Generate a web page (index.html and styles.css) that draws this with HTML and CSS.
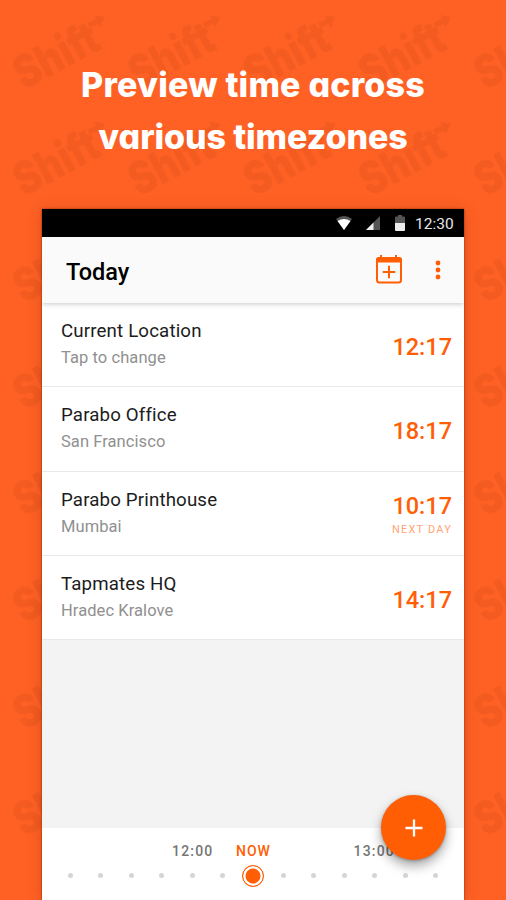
FILE: index.html
```html
<!DOCTYPE html>
<html lang="en">
<head>
<meta charset="utf-8">
<title>Shift</title>
<link rel="stylesheet" href="styles.css">
</head>
<body>
<svg class="backdrop" width="506" height="900" aria-hidden="true">
  <defs>
    <pattern id="shift" x="0" y="0" width="115.3" height="106.7" patternUnits="userSpaceOnUse">
      <g transform="translate(25.500 89.500) rotate(-28)">
        <text class="mark" x="-2" y="0" textLength="90" lengthAdjust="spacingAndGlyphs">Shift</text>
      </g>
      <path d="M94 15l11 2-5 11-2-4-8 4-3-5 9-4z"/>
    </pattern>
  </defs>
  <rect width="506" height="900" fill="url(#shift)"/>
</svg>
<main class="page">
  <h1 class="headline"><span class="line-one">Preview time across</span><span class="line-two">various timezones</span></h1>
  <section class="phone">
    <div class="status">
      <svg class="wifi" width="16" height="14" viewBox="0 0 16 14"><path fill="#555" d="M0 3Q8-3 16 3L8 14z"/><path fill="#fff" d="M1.500 5Q8 1 14.500 5L8 14z"/></svg>
      <svg class="signal" width="14" height="14" viewBox="0 0 14 14"><path fill="#555" d="M14 0v14H0z"/><path fill="#eee" d="M7.500 6.500V14H0z"/></svg>
      <svg class="battery" width="10" height="16" viewBox="0 0 10 16"><path fill="#555" d="M3 0h4v1.500h2q1 0 1 1V8H0V2.500q0-1 1-1h2z"/><path fill="#eee" d="M0 8h10v7q0 1-1 1H1q-1 0-1-1z"/></svg>
      <span>12:30</span>
    </div>
    <header class="appbar">
      <h2>Today</h2>
      <svg class="calendar" width="26" height="29" viewBox="0 0 26 29"><rect x="1" y="3" width="24" height="24.500" rx="2.500" fill="none" stroke="#ff5e05" stroke-width="2"/><path fill="#ff5e05" d="M0 7.500V5q0-3 3-3h1V0h2v2h13V0h2v2h2q3 0 3 3v2.500z"/><path d="M6.700 17h12.600M13 10.700v12.600" stroke="#ff5e05" stroke-width="2"/></svg>
      <svg class="more" width="6" height="20" viewBox="0 0 6 20" fill="#ff5e05"><circle cx="3" cy="3" r="2.400"/><circle cx="3" cy="10" r="2.400"/><circle cx="3" cy="17" r="2.400"/></svg>
    </header>
    <div class="list">
      <article class="row"><div><h3>Current Location</h3><p>Tap to change</p></div><div class="time">12:17</div></article>
      <article class="row"><div><h3>Parabo Office</h3><p>San Francisco</p></div><div class="time">18:17</div></article>
      <article class="row"><div><h3>Parabo Printhouse</h3><p>Mumbai</p></div><div class="time next">10:17<small>NEXT DAY</small></div></article>
      <article class="row"><div><h3>Tapmates HQ</h3><p>Hradec Kralove</p></div><div class="time">14:17</div></article>
    </div>
    <footer class="timeline">
      <div class="hours"><span class="noon">12:00</span><span class="now">NOW</span><span class="one">13:00</span></div>
      <div class="dots"><i></i><i></i><i></i><i></i><i></i><i></i><b></b><i></i><i></i><i></i><i></i><i></i><i></i></div>
      <button class="fab" aria-label="Add"><svg width="18" height="18" viewBox="0 0 18 18"><path d="M.5 9h17M9 .5v17" stroke="#fff" stroke-width="2.300"/></svg></button>
    </footer>
  </section>
</main>
</body>
</html>
```
FILE: styles.css
```css
* { box-sizing: border-box; }
body { margin: 0; background: #ff6124; font-family: Roboto, sans-serif; overflow: hidden; }
svg { display: block; flex: none; }
h1, h2, h3, p { margin: 0; }
.backdrop { position: absolute; left: 0; top: 0; fill: #f35b20; }
.mark { font: 900 46px Inter, sans-serif; }
.page { position: relative; height: 900px; display: flex; flex-direction: column; align-items: center; padding-top: 59px; }
.headline { height: 150px; color: #fff; font: 800 34px/52px Inter, sans-serif; font-feature-settings: "cv11"; text-align: center; white-space: nowrap; }
.headline span { display: block; }
.line-one { letter-spacing: .2px; }
.line-two { letter-spacing: -.1px; }
.phone { width: 422px; height: 691px; display: flex; flex-direction: column; background: #f3f3f3; box-shadow: 0 0 2px rgba(100, 20, 0, .7), 0 2px 14px rgba(120, 30, 0, .25); }
.status { height: 28px; background: #000; color: #e5e5e5; display: flex; align-items: center; padding-left: 294px; font-size: 15.500px; }
.status span { margin: 1px 0 0; }
.signal { margin-left: 14px; }
.battery { margin: 0 10px 1px 15px; }
.appbar { position: relative; height: 66px; background: #fafafa; box-shadow: 0 1px 5px rgba(0, 0, 0, .22); display: flex; align-items: center; padding-left: 24px; clip-path: inset(0 0 -8px 0); }
.appbar h2 { width: 310px; font-weight: 500; font-size: 23.500px; line-height: 28px; margin-top: 3px; }
.calendar { margin-top: -2px; }
.more { margin-left: 33px; }
.list { background: #fff; }
.row { height: 84.350px; border-bottom: 1px solid #e9e9e9; display: flex; justify-content: space-between; padding: 15px 11px 0 19px; }
.row h3 { margin-top: 1px; font-weight: 400; font-size: 18.700px; line-height: 25px; letter-spacing: .15px; color: #1c1c1c; }
.row p { margin-top: 1px; font-size: 16.500px; line-height: 25px; letter-spacing: .07px; color: #909090; }
.time { padding-top: 14px; font-weight: 500; font-size: 23.500px; line-height: 30px; color: #ff5e05; text-align: right; }
.row .time { margin-right: 1px; }
.row .next { padding-top: 4px; }
.time small { display: block; font-weight: 400; font-size: 11px; line-height: 17px; letter-spacing: 1.200px; color: #ffa579; }
.timeline { position: relative; height: 72px; margin-top: auto; background: #fff; }
.hours { height: 45px; display: flex; padding: 15px 0 0 130px; font-weight: 500; font-size: 14px; line-height: 17px; letter-spacing: 1.200px; color: #757575; }
.noon { width: 64px; }
.now { width: 117.500px; letter-spacing: 1px; color: #ff5e05; }
.dots { height: 5px; display: grid; grid-template-columns: repeat(13, 30.450px); grid-template-rows: 5px; justify-content: center; place-items: center; }
.dots i { width: 5px; height: 5px; border-radius: 50%; background: #d5d5d5; }
.dots b { width: 22px; height: 22px; border: 1.500px solid #ff5e05; border-radius: 50%; background: #ff5e05; box-shadow: inset 0 0 0 2.500px #fff; }
.fab { position: absolute; left: 339px; top: -33px; width: 65px; height: 65px; border: 0; border-radius: 50%; background: #ff5e05; box-shadow: 0 6px 12px rgba(0, 0, 0, .35), 0 1px 3px rgba(0, 0, 0, .25); display: grid; place-items: center; padding: 0; }
```
